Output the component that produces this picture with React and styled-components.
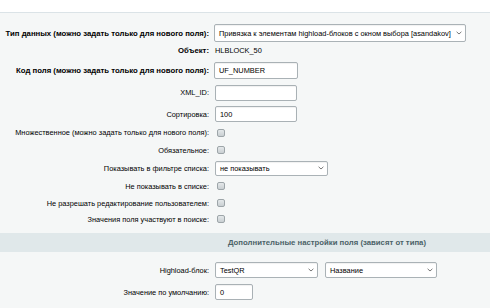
import React from "react";
import styled, { createGlobalStyle } from "styled-components";

const Global = createGlobalStyle`
  html, body { margin: 0; padding: 0; background: #f5f7f7; overflow: hidden; }
  body { font-family: "Liberation Sans", Arial, sans-serif; font-size: 7.4px; color: #000; }
  * { box-sizing: border-box; }
`;

const TopBar = styled.div`
  height: 13px;
  background: #ffffff;
  border-bottom: 1px solid #dbe3e7;
`;

const Form = styled.div`
  width: 100%;
  padding-top: 11px;
`;

const Row = styled.div`
  display: flex;
  align-items: center;
  height: ${(p) => p.h}px;
  margin-top: ${(p) => p.mt || 0}px;
`;

const Label = styled.div`
  width: 214px;
  flex: none;
  padding-right: 5px;
  text-align: right;
  white-space: nowrap;
  font-weight: ${(p) => (p.bold ? 700 : 400)};
  font-size: ${(p) => (p.bold ? "7.75px" : "7.4px")};
`;

const Value = styled.div`
  display: flex;
  align-items: center;
  gap: 7px;
  min-width: 0;
  padding-left: ${(p) => p.pl || 0}px;
`;

const Text = styled.span`
  padding-left: 1px;
`;

const Input = styled.div`
  width: ${(p) => p.w}px;
  flex: none;
  height: ${(p) => p.hh || 16}px;
  background: #fff;
  border: 1px solid #a9b1b5;
  border-radius: 2px;
  box-shadow: inset 0 1px 1px rgba(0, 0, 0, 0.06);
  padding: 0 4px;
  display: flex;
  align-items: center;
  white-space: nowrap;
  overflow: hidden;
`;

const Select = styled(Input)`
  justify-content: space-between;
  padding: 0 3px 0 4px;
  border-color: #aab2b6;
`;

const Chevron = () => (
  <svg width="6" height="4" viewBox="0 0 6 4" style={{ flex: "none" }}>
    <path d="M0.6 0.8 L3 3 L5.4 0.8" fill="none" stroke="#555" strokeWidth="0.8" />
  </svg>
);

const Check = styled.div`
  width: 8px;
  height: 8px;
  margin-left: 2px;
  border: 1px solid #9da5a9;
  border-radius: 2px;
  background: linear-gradient(#e4e8ea, #c9cfd2);
`;

const Band = styled.div`
  height: 19px;
  margin-top: 6px;
  padding-left: 164px;
  background: #e0e8ea;
  display: flex;
  align-items: center;
  justify-content: center;
  white-space: nowrap;
  font-weight: 700;
  font-size: 7.75px;
  color: #4b6267;
`;

const SelectBox = ({ w, hh, children }) => (
  <Select w={w} hh={hh}>
    <span>{children}</span>
    <Chevron />
  </Select>
);

const CheckRow = ({ h, label }) => (
  <Row h={h}>
    <Label>{label}</Label>
    <Value pl={1}>
      <Check />
    </Value>
  </Row>
);

export default function App() {
  return (
    <>
      <Global />
      <TopBar />
      <Form>
        <Row h={18}>
          <Label bold>Тип данных (можно задать только для нового поля):</Label>
          <Value>
            <SelectBox w={252} hh={18}>
              Привязка к элементам highload-блоков с окном выбора [asandakov]
            </SelectBox>
          </Value>
        </Row>
        <Row h={17}>
          <Label bold>Объект:</Label>
          <Value>
            <Text>HLBLOCK_50</Text>
          </Value>
        </Row>
        <Row h={22}>
          <Label bold>Код поля (можно задать только для нового поля):</Label>
          <Value>
            <Input w={84} hh={17}>UF_NUMBER</Input>
          </Value>
        </Row>
        <Row h={23}>
          <Label>XML_ID:</Label>
          <Value pl={1}>
            <Input w={82} />
          </Value>
        </Row>
        <Row h={20}>
          <Label>Сортировка:</Label>
          <Value pl={1}>
            <Input w={82}>100</Input>
          </Value>
        </Row>
        <CheckRow h={17} label="Множественное (можно задать только для нового поля):" />
        <CheckRow h={18} label="Обязательное:" />
        <Row h={18}>
          <Label>Показывать в фильтре списка:</Label>
          <Value pl={1}>
            <SelectBox w={113} hh={15}>не показывать</SelectBox>
          </Value>
        </Row>
        <CheckRow h={18} label="Не показывать в списке:" />
        <CheckRow h={16} label="Не разрешать редактирование пользователем:" />
        <CheckRow h={16} label="Значения поля участвуют в поиске:" />
        <Band>Дополнительные настройки поля (зависят от типа)</Band>
        <Row h={22} mt={7}>
          <Label>Highload-блок:</Label>
          <Value pl={1}>
            <SelectBox w={103} hh={16}>TestQR</SelectBox>
            <SelectBox w={112} hh={16}>Название</SelectBox>
          </Value>
        </Row>
        <Row h={22}>
          <Label>Значение по умолчанию:</Label>
          <Value pl={1}>
            <Input w={38}>0</Input>
          </Value>
        </Row>
      </Form>
    </>
  );
}
